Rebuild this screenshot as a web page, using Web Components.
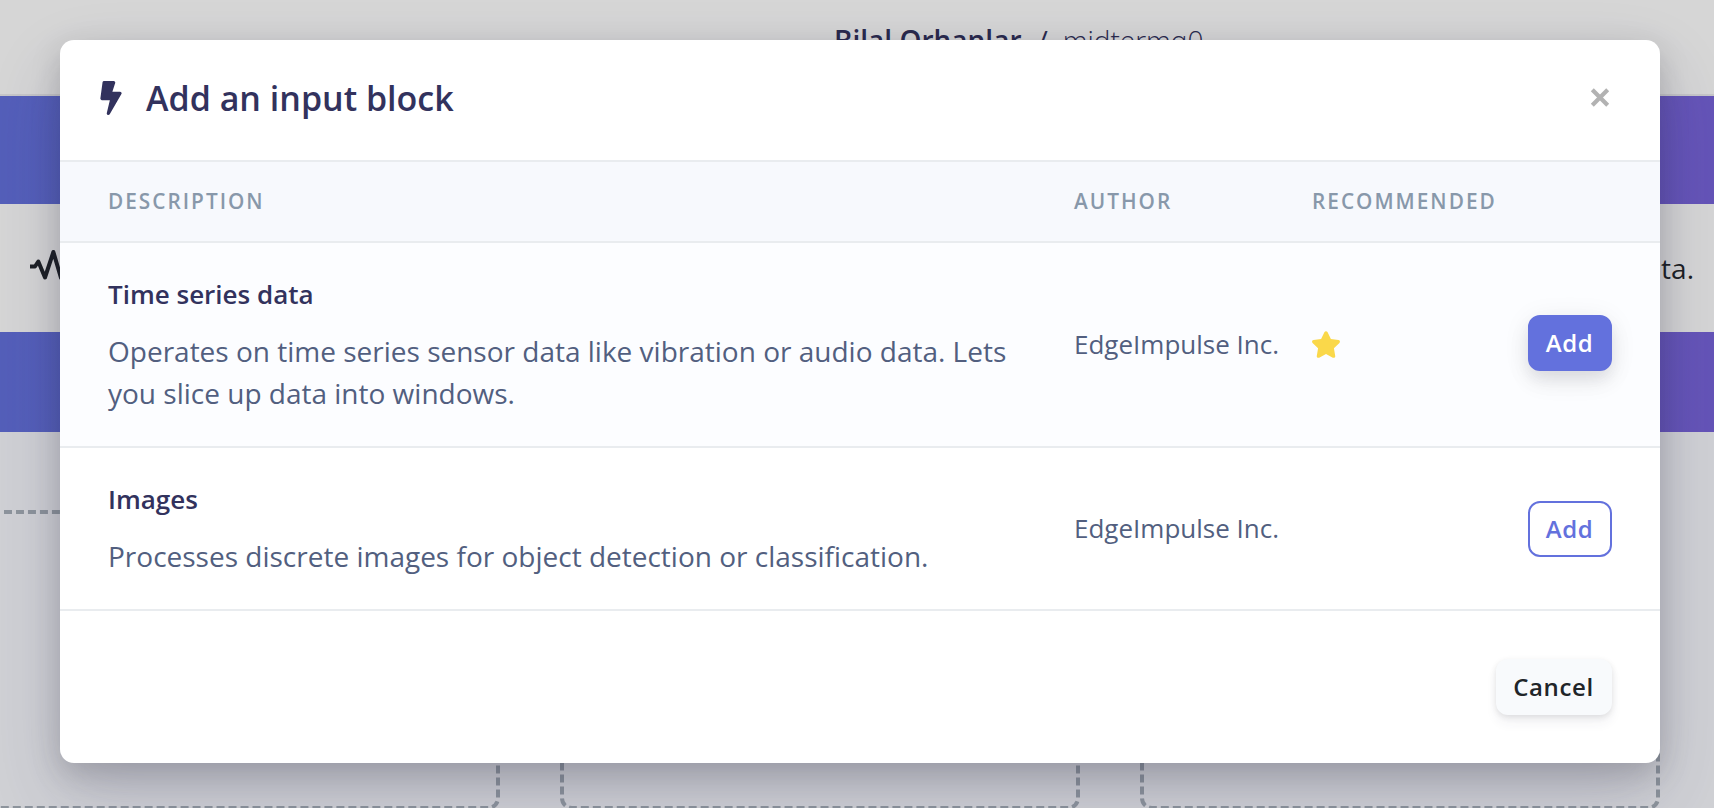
<!DOCTYPE html>
<html lang="en">
<head>
<meta charset="utf-8">
<title>Add an input block</title>
<style>
html,body{margin:0;height:808px;overflow:hidden}
body{font-family:"Open Sans",sans-serif;background:#d0d1d5}
</style>
</head>
<body>
<studio-page>
  <block-dialog heading="Add an input block">
    <block-row name="Time series data" author="EdgeImpulse Inc." recommended>Operates on time series sensor data like vibration or audio data. Lets you slice up data into windows.</block-row>
    <block-row name="Images" author="EdgeImpulse Inc.">Processes discrete images for object detection or classification.</block-row>
  </block-dialog>
</studio-page>
<script>
class StudioPage extends HTMLElement{
  constructor(){super();this.attachShadow({mode:'open'}).innerHTML=`
<style>
:host{display:block;position:relative;width:1714px;height:808px;overflow:hidden;color:#2a2a4e}
nav{box-sizing:border-box;height:96px;background:#d6d6d6;border-bottom:2px solid #c6c6c8;padding:21px 0 0 834px;display:flex;align-items:flex-start;font-size:28px;line-height:38px;white-space:pre}
b{font-weight:600}
.proj{font-weight:300}
.sep{margin:0 15px 0 16px}
.band{background:linear-gradient(90deg,#545fba,#6554b8)}
.a{height:108px}.b{height:100px}
.note{height:128px;background:#d6d6d6;display:flex;justify-content:space-between;align-items:center;box-sizing:border-box;padding:0 20px 0 30px;font-size:28px;color:#1c1f24}
.note svg{display:block;margin-top:-5px}
.cards{display:flex;gap:60px;margin:78px 0 0 -20px}
.cards i{box-sizing:border-box;flex:0 0 520px;height:300px;border:4px dashed #8d949c;border-radius:12px}
.over{position:absolute;left:60px;top:40px}
</style>
<nav><b>Bilal Orhanlar</b><span class="sep">/</span><span class="proj">midtermq0</span></nav>
<div class="band a"></div>
<div class="note"><svg width="44" height="34" viewBox="0 0 44 34" fill="none" stroke="currentColor" stroke-width="4" stroke-linejoin="round"><path d="M0 17.500H5L8.300 12.500L15 28.500L23.400 3L31 29L36 17.500H44"/></svg><span>ta.</span></div>
<div class="band b"></div>
<div class="cards"><i></i><i></i><i></i></div>
<div class="over"><slot></slot></div>`}
}
class ActionButton extends HTMLElement{
  constructor(){super();this.attachShadow({mode:'open'}).innerHTML=`
<style>
:host{display:inline-block}
button{box-sizing:border-box;display:block;width:100%;height:56px;margin:0;padding:0 1px 0 0;border:2px solid #6371dd;border-radius:12px;background:#fff;color:#6371dd;font:600 24px/32px "Open Sans",sans-serif;letter-spacing:.6px;text-align:center;white-space:nowrap}
:host([kind=primary]) button{background:#6371dd;color:#fff;box-shadow:0 8px 12px rgba(50,50,93,.05),0 4px 28px rgba(0,0,0,.07),0 12px 24px rgba(0,0,0,.06)}
:host([kind=primary]){margin-bottom:4px}
:host([kind=plain]) button{background:#f8fafc;border-color:#f8fafc;color:#212529;box-shadow:0 8px 12px rgba(50,50,93,.06),0 2px 6px rgba(0,0,0,.10)}
</style><button><slot></slot></button>`}
}
class BlockRow extends HTMLElement{
  constructor(){super();this.attachShadow({mode:'open'}).innerHTML=`
<style>
:host{box-sizing:border-box;display:grid;grid-template-columns:966px 238px 216px 84px;align-items:center;padding:32px 48px;border-bottom:2px solid #e9ecef;color:#525f7f}
:host([recommended]){background:#fcfdff}
h4{margin:0;font-size:26px;line-height:39px;font-weight:600;color:#32325d}
p{margin:16px 0 0;width:920px;font-size:28px;line-height:42px}
.who{font-size:26px;line-height:39px;white-space:nowrap}
svg{display:none;margin-left:-1px}
:host([recommended]) svg{display:block}
</style>
<div><h4></h4><p><slot></slot></p></div><div class="who"></div>
<div><svg width="30" height="27" viewBox="0 0 576 512" fill="#fad84a"><path d="M259.300 17.800L194 150.200 47.900 171.500c-26.200 3.800-36.700 36.100-17.700 54.600l105.700 103-25 145.500c-4.500 26.300 23.200 46 46.400 33.700L288 439.600l130.700 68.700c23.200 12.200 50.900-7.400 46.400-33.700l-25-145.500 105.700-103c19-18.500 8.500-50.800-17.700-54.600L382 150.200 316.700 17.800c-11.700-23.600-45.600-23.900-57.400 0z"/></svg></div>
<action-button>Add</action-button>`}
  connectedCallback(){
    const r=this.shadowRoot;
    r.querySelector('h4').textContent=this.getAttribute('name');
    r.querySelector('.who').textContent=this.getAttribute('author');
    if(this.hasAttribute('recommended'))r.querySelector('action-button').setAttribute('kind','primary');
  }
}
class BlockDialog extends HTMLElement{
  constructor(){super();this.attachShadow({mode:'open'}).innerHTML=`
<style>
:host{display:block;width:1600px;height:723px;background:#fff;border-radius:14px;overflow:hidden;box-shadow:0 30px 70px rgba(50,50,93,.2),0 10px 30px rgba(0,0,0,.17)}
header{box-sizing:border-box;height:120px;padding:0 50px 4px 40px;display:flex;align-items:center;color:#32325d}
h2{margin:0 auto 0 24px;font-size:34px;font-weight:600;line-height:44px}
.heads{box-sizing:border-box;height:83px;display:grid;grid-template-columns:966px 238px 300px;align-items:center;padding:0 48px 2px;background:#f7f9fd;border:solid #e9ecef;border-width:2px 0;color:#8898aa;font-size:20.800px;font-weight:600;letter-spacing:2px}
footer{display:flex;justify-content:flex-end;padding:48px 48px 0}
footer action-button{width:116px}
</style>
<header><svg width="22" height="34" viewBox="0 0 320 512" fill="currentColor"><path d="M296 160H180.600l42.600-129.800C227.200 15 215.700 0 200 0H56C44 0 33.800 8.900 32.200 20.800l-32 240C-1.700 275.200 9.500 288 24 288h118.700L96.600 482.500c-3.600 15.200 8 29.500 23.300 29.500 8.400 0 16.400-4.400 20.800-12l176-304c9.300-15.900-2.200-36-20.700-36z"/></svg>
<h2></h2>
<svg width="20" height="20" viewBox="0 0 20 20" stroke="#b2b2b2" stroke-width="4.200" stroke-linecap="butt"><path d="M2.300 1.800L17.700 17.200M17.700 1.800L2.300 17.200"/></svg></header>
<div class="heads"><span>DESCRIPTION</span><span>AUTHOR</span><span>RECOMMENDED</span></div>
<slot></slot>
<footer><action-button kind="plain">Cancel</action-button></footer>`}
  connectedCallback(){this.shadowRoot.querySelector('h2').textContent=this.getAttribute('heading')}
}
customElements.define('action-button',ActionButton);
customElements.define('block-row',BlockRow);
customElements.define('block-dialog',BlockDialog);
customElements.define('studio-page',StudioPage);
</script>
</body>
</html>
